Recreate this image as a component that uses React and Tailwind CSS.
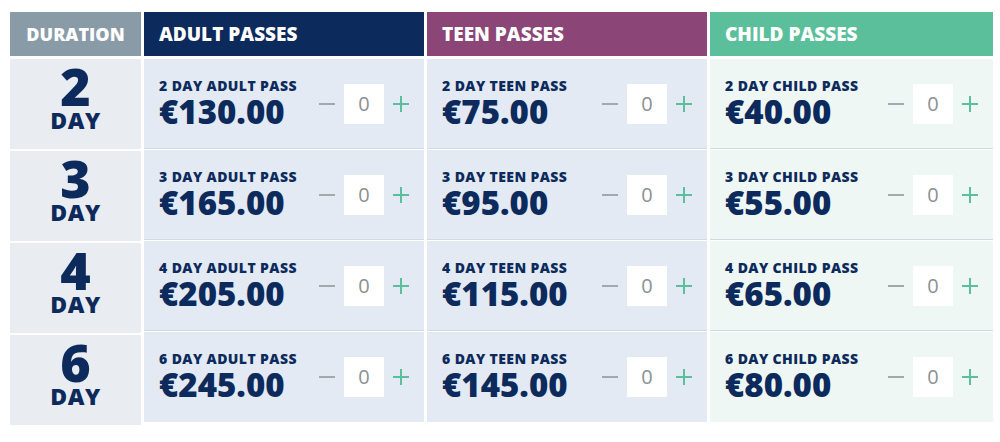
import React from 'react'

const rows = [
  { days: 2, adult: '130.00', teen: '75.00', child: '40.00' },
  { days: 3, adult: '165.00', teen: '95.00', child: '55.00' },
  { days: 4, adult: '205.00', teen: '115.00', child: '65.00' },
  { days: 6, adult: '245.00', teen: '145.00', child: '80.00' },
]

const Minus = () => (
  <svg width="18" height="18" viewBox="0 0 18 18" className="text-[#a3a8ae]">
    <line x1="1" y1="9" x2="17" y2="9" stroke="currentColor" strokeWidth="2" />
  </svg>
)

const Plus = () => (
  <svg width="18" height="18" viewBox="0 0 18 18" className="text-[#5cbf9b]">
    <line x1="1" y1="9" x2="17" y2="9" stroke="currentColor" strokeWidth="2" />
    <line x1="9" y1="1" x2="9" y2="17" stroke="currentColor" strokeWidth="2" />
  </svg>
)

const Counter = () => (
  <div className="flex items-center gap-[8px]">
    <button className="flex items-center justify-center"><Minus /></button>
    <div className="w-[40px] h-[40px] bg-white flex items-center justify-center text-[20px] text-[#8c9095]">0</div>
    <button className="flex items-center justify-center"><Plus /></button>
  </div>
)

const PassCell = ({ label, price, bg, last }) => (
  <div className={`h-[90px] ${bg} flex items-center justify-between pl-[15px] pr-[14px] ${last ? '' : 'border-b border-[#d3d9e0]'}`}>
    <div className="flex flex-col text-[#0d2a5c] font-extrabold">
      <span className="text-[14px] leading-[16px] tracking-[0.4px]">{label}</span>
      <span className="text-[33px] leading-[36px]">€{price}</span>
    </div>
    <Counter />
  </div>
)

const PassColumn = ({ title, header, bg, type }) => (
  <div className="flex flex-col gap-[3px]">
    <div className={`h-[44px] ${header} flex items-center px-[15px] text-white font-extrabold text-[19px]`}>
      {title}
    </div>
    <div className="flex flex-col gap-px">
      {rows.map((r, i) => (
        <PassCell
          key={r.days}
          label={`${r.days} DAY ${type} PASS`}
          price={r[type.toLowerCase()]}
          bg={bg}
          last={i === rows.length - 1}
        />
      ))}
    </div>
  </div>
)

export default function App() {
  return (
    <div className="w-[1000px] h-[442px] bg-white pt-[12px] pl-[10px]" style={{ fontFamily: '"Open Sans", Arial, sans-serif' }}>
      <div className="grid grid-cols-[131px_280px_280px_283px] gap-x-[3px] w-[983px]">
        {/* Duration column */}
        <div className="flex flex-col gap-[3px]">
          <div className="h-[44px] bg-[#8a9ba8] flex items-center justify-center text-white font-extrabold text-[18px]">
            DURATION
          </div>
          <div className="flex flex-col gap-[2px]">
            {rows.map((r) => (
              <div key={r.days} className="h-[90px] bg-[#e9edf1] flex flex-col items-center justify-center pb-[12px] text-[#0d2a5c] font-extrabold">
                <span className="text-[52px] leading-[44px]">{r.days}</span>
                <span className="text-[23px] leading-[24px] tracking-[0.5px]">DAY</span>
              </div>
            ))}
          </div>
        </div>
        <PassColumn title="ADULT PASSES" header="bg-[#0c2a5b]" bg="bg-[#e3eaf4]" type="ADULT" />
        <PassColumn title="TEEN PASSES" header="bg-[#8b4577]" bg="bg-[#e3eaf4]" type="TEEN" />
        <PassColumn title="CHILD PASSES" header="bg-[#5cbf9b]" bg="bg-[#eef7f4]" type="CHILD" />
      </div>
    </div>
  )
}
